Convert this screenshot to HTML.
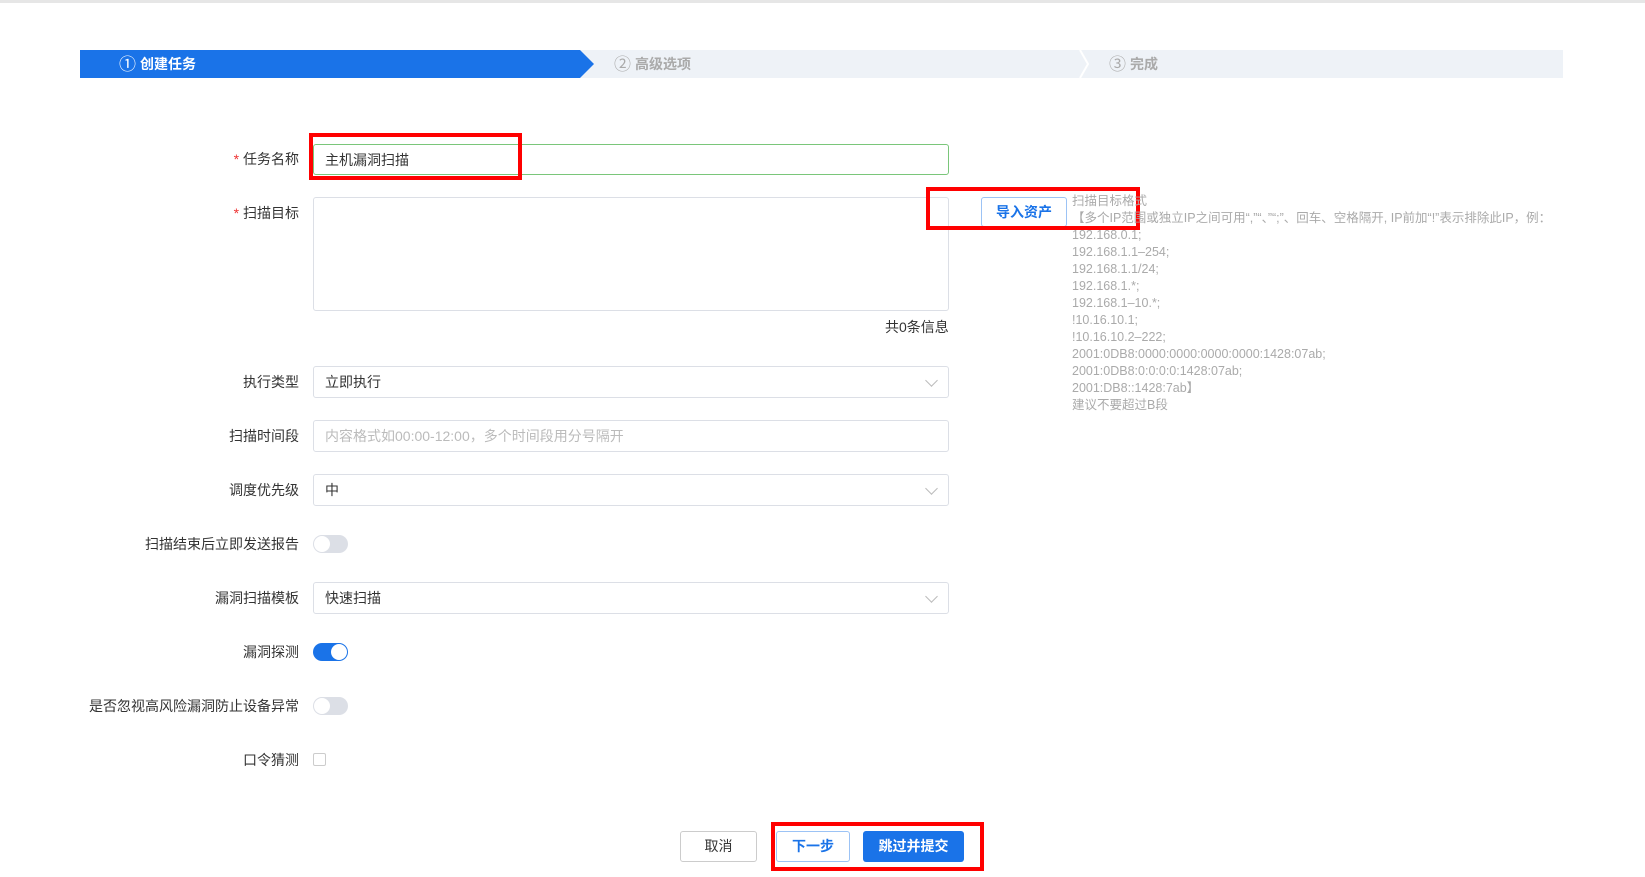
<!DOCTYPE html>
<html><head><meta charset="utf-8"><style>
*{box-sizing:border-box;margin:0;padding:0}
body{width:1645px;height:877px;background:#fff;font-family:"Liberation Sans","Noto Sans CJK SC",sans-serif;position:relative;overflow:hidden;color:#333;font-size:14px}
.a{position:absolute}
.lbl{position:absolute;right:1346px;font-size:14px;color:#333;white-space:nowrap;line-height:20px}
.star{color:#e33}
.inp{position:absolute;left:313px;width:636px;height:32px;border:1px solid #dcdfe6;border-radius:3px;padding-left:11px;line-height:30px;font-size:14px;color:#333}
.chev{position:absolute;right:12px;top:9px;width:9px;height:9px;border-right:1px solid #bbb;border-bottom:1px solid #bbb;transform:rotate(45deg)}
.sw{position:absolute;left:313px;width:35px;height:18px;border-radius:9px;background:#dcdfe6}
.sw::after{content:"";position:absolute;left:1px;top:1px;width:16px;height:16px;border-radius:50%;background:#fff}
.sw.on{background:#1a73e8}.sw.on::after{left:18px}
.red{position:absolute;border:4px solid #f00}
.hint{position:absolute;left:1072px;top:193px;font-size:12.5px;color:#aaa;line-height:17px;white-space:nowrap}
.btn{position:absolute;top:831px;height:31px;border-radius:3px;font-size:14px;text-align:center;line-height:29px}
.n{font-size:17px;font-weight:normal;margin-right:4px;vertical-align:-1px}
</style></head><body>
<div class="a" style="left:0;top:0;width:1645px;height:3px;background:#e6e6e6"></div>
<div class="a" style="left:80px;top:50px;width:1483px;height:28px;background:#eef2f7"></div>
<svg class="a" style="left:80px;top:50px" width="1010" height="28"><polygon points="0,0 500,0 514,14 500,28 0,28" fill="#1a73e8"/><polyline points="1000,0 1008,14 1000,28" fill="none" stroke="#fff" stroke-width="2"/></svg>
<div class="a" style="left:119px;top:54px;color:#fff;font-size:14px;font-weight:bold;line-height:20px"><span class="n">①</span>创建任务</div>
<div class="a" style="left:614px;top:54px;color:#aaa;font-size:14px;font-weight:bold;line-height:20px"><span class="n">②</span>高级选项</div>
<div class="a" style="left:1109px;top:54px;color:#aaa;font-size:14px;font-weight:bold;line-height:20px"><span class="n">③</span>完成</div>

<div class="lbl" style="top:149px"><span class="star">* </span>任务名称</div>
<div class="inp" style="top:144px;height:31px;border-color:#7ac67a">主机漏洞扫描</div>
<div class="red" style="left:309px;top:133px;width:213px;height:47px"></div>

<div class="lbl" style="top:203px"><span class="star">* </span>扫描目标</div>
<div class="inp" style="top:197px;height:114px"></div>
<div class="a" style="left:885px;top:317px;line-height:20px">共0条信息</div>
<div class="a" style="left:981px;top:197px;width:86px;height:30px;border:1px solid #9cc3f5;border-radius:3px;color:#1a73e8;font-weight:bold;text-align:center;line-height:28px;background:#fff">导入资产</div>
<div class="red" style="left:926px;top:187px;width:214px;height:43px"></div>
<div class="hint">扫描目标格式<br>【多个IP范围或独立IP之间可用“,”“、”“;”、回车、空格隔开, IP前加“!”表示排除此IP，例：<br>192.168.0.1;<br>192.168.1.1–254;<br>192.168.1.1/24;<br>192.168.1.*;<br>192.168.1–10.*;<br>!10.16.10.1;<br>!10.16.10.2–222;<br>2001:0DB8:0000:0000:0000:0000:1428:07ab;<br>2001:0DB8:0:0:0:0:1428:07ab;<br>2001:DB8::1428:7ab】<br>建议不要超过B段</div>

<div class="lbl" style="top:372px">执行类型</div>
<div class="inp" style="top:366px">立即执行<span class="chev"></span></div>
<div class="lbl" style="top:426px">扫描时间段</div>
<div class="inp" style="top:420px;color:#bbb">内容格式如00:00-12:00，多个时间段用分号隔开</div>
<div class="lbl" style="top:480px">调度优先级</div>
<div class="inp" style="top:474px">中<span class="chev"></span></div>
<div class="lbl" style="top:534px">扫描结束后立即发送报告</div>
<div class="sw" style="top:535px"></div>
<div class="lbl" style="top:588px">漏洞扫描模板</div>
<div class="inp" style="top:582px">快速扫描<span class="chev"></span></div>
<div class="lbl" style="top:642px">漏洞探测</div>
<div class="sw on" style="top:643px"></div>
<div class="lbl" style="top:696px">是否忽视高风险漏洞防止设备异常</div>
<div class="sw" style="top:697px"></div>
<div class="lbl" style="top:750px">口令猜测</div>
<div class="a" style="left:313px;top:753px;width:13px;height:13px;border:1px solid #ccc;border-radius:2px"></div>

<div class="btn" style="left:680px;width:77px;border:1px solid #ccc;color:#333">取消</div>
<div class="btn" style="left:776px;width:74px;border:1px solid #9cc3f5;color:#1a73e8;font-weight:bold">下一步</div>
<div class="btn" style="left:863px;width:101px;background:#1a73e8;color:#fff;font-weight:bold;line-height:31px">跳过并提交</div>
<div class="red" style="left:771px;top:822px;width:213px;height:49px"></div>
</body></html>
